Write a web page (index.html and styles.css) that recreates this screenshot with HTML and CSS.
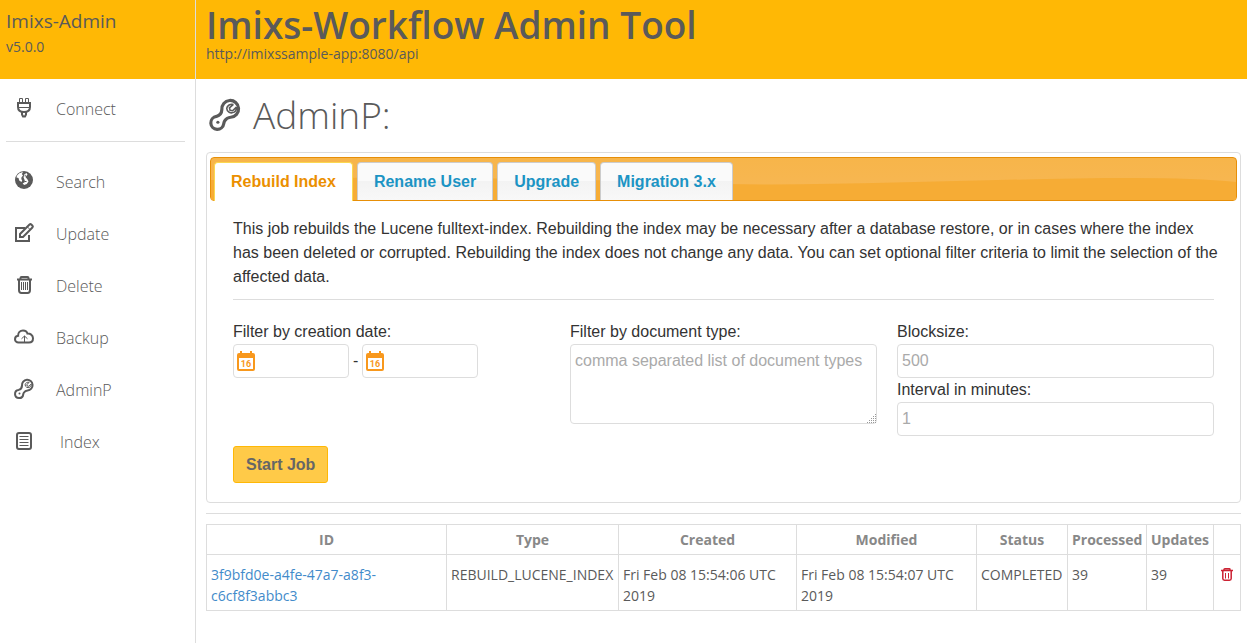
FILE: index.html
```html
<!DOCTYPE html>
<html lang="en">
<head>
<meta charset="utf-8">
<meta name="viewport" content="width=device-width, initial-scale=1">
<title>Imixs-Workflow Admin Tool</title>
<link rel="stylesheet" href="styles.css">
</head>
<body>
<svg class="defs" aria-hidden="true">
  <symbol id="wrench" viewBox="0 0 24 24">
    <path d="M10 8.600A5.300 5.300 0 1 1 15.600 13.400C14 13.500 12.700 14.300 11.800 15.700C11.400 16.300 11.300 16.900 11.200 17.500A4.100 4.100 0 1 1 6.600 12.900C8.800 12.300 9.900 10.800 10 8.600Z" fill="none" stroke="currentColor" stroke-width="2"/>
    <path d="M17.300 5.300L14.800 7.500L15.200 9L16.800 9.300L19.200 7M17.300 5.300C15.400 4.800 13.300 5.900 13.100 7.800C13.200 10 15.500 11.400 17.800 10.200C19 9.400 19.400 8.200 19.200 7" fill="none" stroke="currentColor" stroke-width="1"/>
    <circle cx="7.500" cy="16.600" r="1" fill="currentColor"/>
  </symbol>
  <symbol id="trash" viewBox="0 0 24 24">
    <path d="M5 6.500H20M8.500 6.500V5Q8.500 4 9.500 4H15.500Q16.500 4 16.500 5V6.500M7 7V17Q7 20 9.500 20H15.500Q18 20 18 17V7" fill="none" stroke="currentColor" stroke-width="2"/>
    <path d="M9.500 9V17M11.500 9V17M13.500 9V17M15.500 9V17" fill="none" stroke="currentColor" stroke-width="1"/>
  </symbol>
</svg>

<div class="app">
  <aside class="sidebar">
    <div class="brand">
      <div class="brand-name">Imixs-Admin</div>
      <div class="brand-version">v5.0.0</div>
    </div>
    <nav class="nav">
      <a class="nav-item" href="#connect">
        <svg class="icon" viewBox="0 0 24 24"><path d="M7.500 7V2.500H10.500V7M13.500 7V2.500H16.500V7" fill="none" stroke="currentColor"/><path d="M6 11V7H18V11C18 14.500 15.500 16 12 16C8.500 16 6 14.500 6 11Z" fill="none" stroke="currentColor" stroke-width="2"/><path d="M6 11.500H18" stroke="currentColor"/><path d="M10 16V18.500L11 20.500H13L14 18.500V16" fill="none" stroke="currentColor" stroke-width="2"/></svg>
        <span>Connect</span>
      </a>
      <hr class="nav-rule">
      <a class="nav-item" href="#search">
        <svg class="icon" viewBox="0 0 24 24"><circle cx="12" cy="11" r="9" fill="currentColor"/><path d="M4.500 8.500C5 5.500 8 3.300 11 3.300L9.800 5L11 6.500L9.500 8.300L9.300 10L10.200 11.500L9.500 13L7.200 11.500L6.500 9Z" fill="#fff"/><path d="M12.200 5.600L14.500 4L15.500 5.500L13.500 8L15.500 10.500L16.500 12.500L14.800 15L12.200 16L10.600 14.500L13 13L12.600 11L11.600 8.500Z" fill="#fff"/><path d="M13.200 7.500V5.800M14.500 12.500H13" stroke="currentColor"/></svg>
        <span>Search</span>
      </a>
      <a class="nav-item" href="#update">
        <svg class="icon" viewBox="0 0 24 24"><path d="M13 7H4V20H17V14" fill="none" stroke="currentColor" stroke-width="2"/><path d="M8 13L17.500 3.500Q18.500 2.700 19.500 3.700L20.500 4.700Q21.300 5.700 20.400 6.500L11 16H8Z" fill="none" stroke="currentColor" stroke-width="2"/><path d="M15.500 6L18 8.500" stroke="currentColor"/></svg>
        <span>Update</span>
      </a>
      <a class="nav-item" href="#delete">
        <svg class="icon"><use href="#trash"/></svg>
        <span>Delete</span>
      </a>
      <a class="nav-item" href="#backup">
        <svg class="icon" viewBox="0 0 24 24"><path d="M6.500 17.500C4.500 17.500 3 16 3 14.200C3 12.300 4.300 11 6.100 10.800C5.900 7.500 8.200 5.500 11 5.500C13.200 5.500 15 6.700 15.500 8.600C18 8.400 21 10 21 13.200C21 15.700 19.500 17.500 17 17.500Z" fill="none" stroke="currentColor" stroke-width="2"/><path d="M12.500 17V11M9.500 13.800L12.500 11L15.500 13.800" fill="none" stroke="currentColor" stroke-width="1"/></svg>
        <span>Backup</span>
      </a>
      <a class="nav-item" href="#adminp">
        <svg class="icon"><use href="#wrench"/></svg>
        <span>AdminP</span>
      </a>
      <a class="nav-item" href="#index">
        <svg class="icon" viewBox="0 0 24 24"><rect x="5" y="4" width="14" height="16" rx="2" fill="none" stroke="currentColor" stroke-width="2"/><path d="M7.500 7.500H16.500M7.500 10.500H16.500M7.500 13.500H16.500M7.500 16.500H16.500" stroke="currentColor" stroke-width="1"/></svg>
        <span class="nav-label-inset">Index</span>
      </a>
    </nav>
  </aside>

  <div class="main">
    <header class="masthead">
      <h1 class="title">Imixs-Workflow Admin Tool</h1>
      <div class="endpoint">http://imixssample-app:8080/api</div>
    </header>
    <main class="content">
      <h2 class="page-title"><svg class="page-icon" aria-hidden="true"><use href="#wrench"/></svg>AdminP:</h2>

      <section class="panel">
        <div class="tabs" role="tablist">
          <svg class="tabs-wave" viewBox="0 0 1000 42" preserveAspectRatio="none" aria-hidden="true"><path d="M0 22C170 18 330 20 460 25C600 30 760 20 900 20Q960 20 1000 24V42H0Z" fill="#f6ac35"/></svg>
          <button class="tab tab-active" role="tab" type="button" aria-selected="true">Rebuild Index</button>
          <button class="tab" role="tab" type="button">Rename User</button>
          <button class="tab" role="tab" type="button">Upgrade</button>
          <button class="tab" role="tab" type="button">Migration 3.x</button>
        </div>
        <form class="job">
          <p class="intro">This job rebuilds the Lucene fulltext-index. Rebuilding the index may be necessary after a database restore, or in cases where the index has been deleted or corrupted. Rebuilding the index does not change any data. You can set optional filter criteria to limit the selection of the affected data.</p>
          <hr class="rule">
          <div class="fields">
            <div>
              <label class="label" for="from">Filter by creation date:</label>
              <div class="dates">
                <span class="date"><input class="input" id="from" type="text"><svg class="date-icon" viewBox="0 0 18 20"><path d="M2 2H3V0H5V2H13V0H15V2H16Q18 2 18 4V18Q18 20 16 20H2Q0 20 0 18V4Q0 2 2 2Z" fill="#f8981d"/><path d="M2 7H16V18H2Z" fill="#fff"/><text x="9" y="16" text-anchor="middle" class="cal-day">16</text></svg></span>
                <span>-</span>
                <span class="date"><input class="input" id="to" type="text" aria-label="Filter by creation date, end"><svg class="date-icon" viewBox="0 0 18 20"><path d="M2 2H3V0H5V2H13V0H15V2H16Q18 2 18 4V18Q18 20 16 20H2Q0 20 0 18V4Q0 2 2 2Z" fill="#f8981d"/><path d="M2 7H16V18H2Z" fill="#fff"/><text x="9" y="16" text-anchor="middle" class="cal-day">16</text></svg></span>
              </div>
            </div>
            <div>
              <label class="label" for="types">Filter by document type:</label>
              <div class="area">
                <textarea class="input textarea" id="types" placeholder="comma separated list of document types"></textarea>
                <svg class="grip" viewBox="0 0 10 10" aria-hidden="true"><path d="M8 0h1v1h-1zM6 2h1v1h-1zM8 2h1v1h-1zM4 4h1v1h-1zM6 4h1v1h-1zM8 4h1v1h-1zM2 6h1v1h-1zM4 6h1v1h-1zM6 6h1v1h-1zM8 6h1v1h-1zM0 8h1v1h-1zM2 8h1v1h-1zM4 8h1v1h-1zM6 8h1v1h-1zM8 8h1v1h-1z" fill="#999"/></svg>
              </div>
            </div>
            <div>
              <label class="label" for="block">Blocksize:</label>
              <input class="input" id="block" type="text" placeholder="500">
              <label class="label" for="interval">Interval in minutes:</label>
              <input class="input" id="interval" type="text" placeholder="1">
            </div>
          </div>
          <button class="start" type="button">Start Job</button>
        </form>
      </section>

      <hr class="rule section-rule">

      <table class="jobs">
        <colgroup><col><col class="c-type"><col class="c-created"><col class="c-modified"><col class="c-status"><col class="c-processed"><col class="c-updates"><col class="c-action"></colgroup>
        <thead>
          <tr><th>ID</th><th>Type</th><th>Created</th><th>Modified</th><th>Status</th><th>Processed</th><th>Updates</th><th></th></tr>
        </thead>
        <tbody>
          <tr>
            <td><a class="job-link" href="#job">3f9bfd0e-a4fe-47a7-a8f3-c6cf8f3abbc3</a></td>
            <td>REBUILD_LUCENE_INDEX</td>
            <td>Fri Feb 08 15:54:06 UTC 2019</td>
            <td>Fri Feb 08 15:54:07 UTC 2019</td>
            <td>COMPLETED</td>
            <td>39</td>
            <td>39</td>
            <td><button class="remove" type="button" aria-label="Delete job"><svg class="remove-icon" viewBox="0 0 12 13"><path d="M0 2.500H12M3 2.500V1.500Q3 .8 3.800 .8H8.200Q9 .8 9 1.500V2.500M1.800 3V10.500Q1.800 12.200 3.500 12.200H8.500Q10.200 12.200 10.200 10.500V3" fill="none" stroke="currentColor" stroke-width="1.500"/><path d="M4.500 5V10.500M7.500 5V10.500" stroke="currentColor" stroke-width="1"/></svg></button></td>
          </tr>
        </tbody>
      </table>
    </main>
  </div>
</div>
</body>
</html>
```

FILE: styles.css
```css
* { box-sizing: border-box; }

body {
  margin: 0;
  background: #fff;
  color: #5a5a5a;
  font-family: "Open Sans", "Noto Sans", sans-serif;
  font-size: 14px;
  line-height: 21px;
}

.defs { position: absolute; width: 0; height: 0; }

.app { display: flex; min-height: 100vh; }

.sidebar {
  flex: 0 0 196px;
  border-right: 1px solid #ddd;
}

.brand {
  height: 79px;
  padding: 8px 6px;
  background: #ffb805;
}
.brand-name { font-size: 19px; line-height: 26px; }
.brand-version { line-height: 26px; }

.nav { padding: 4px 10px 0 6px; }
.nav-item {
  display: flex;
  align-items: center;
  gap: 20px;
  height: 52px;
  padding-left: 6px;
  color: #5a5a5a;
  font-size: 16px;
  font-weight: 300;
  text-decoration: none;
}
.nav-label-inset { padding-left: 4px; }
.nav-rule { margin: 6px 0 14px; border: 0; border-top: 1px solid #ddd; }
.icon { width: 24px; height: 24px; margin-bottom: 2px; }

.main { flex: 1; min-width: 0; }

.masthead {
  height: 79px;
  padding: 4px 10px;
  background: #ffb805;
}
.title { margin: 0; font-size: 37px; font-weight: 600; line-height: 42px; }
.endpoint { line-height: 16px; }

.content { padding: 10px 6px 10px 10px; }

.page-title {
  display: flex;
  align-items: center;
  gap: 9px;
  margin: 0 0 11px;
  font-size: 37px;
  font-weight: 300;
  line-height: 52px;
}
.page-icon { width: 38px; height: 38px; }

.panel {
  padding: 4px 3px 19px;
  border: 1px solid #ddd;
  border-radius: 4px;
  color: #333;
  font-family: "Liberation Sans", Arial, sans-serif;
  font-size: 16px;
  line-height: 24px;
}

.tabs {
  position: relative;
  display: flex;
  gap: 4px;
  height: 44px;
  padding: 4px 3px 0;
  border: 1px solid #e78f08;
  border-radius: 4px;
  background: linear-gradient(#f7b54a, #f7b755);
}
.tabs-wave { position: absolute; left: 0; top: 0; width: 100%; height: 100%; }
.tab {
  position: relative;
  height: 38px;
  padding: 0 16px;
  border: 1px solid #ccc;
  border-bottom: 0;
  border-radius: 4px 4px 0 0;
  background: linear-gradient(#fafafa 50%, #f3f3f3 50%, #f8f8f8);
  color: #1c94c4;
  font: bold 16px/24px "Liberation Sans", Arial, sans-serif;
}
.tab-active {
  height: 39px;
  border-color: #fbd850;
  background: #fff;
  color: #eb8f00;
}

.job { padding: 16px 23px 0; }
.intro { margin: 0 -8px 10px 0; }
.rule { margin: 0; border: 0; border-top: 1px solid #ddd; }

.fields {
  display: grid;
  grid-template-columns: 317fr 307fr 317fr;
  gap: 20px;
  margin: 20px 0 10px;
}
.label { display: block; }

.input {
  display: block;
  width: 100%;
  height: 34px;
  padding: 4px;
  border: 1px solid #ddd;
  border-radius: 4px;
  background: #fff;
  color: #333;
  font: 16px/24px "Liberation Sans", Arial, sans-serif;
}
.input::placeholder { color: #aaa; }
.area { position: relative; }
.textarea { height: 80px; resize: none; }
.grip { position: absolute; right: 0; bottom: 0; width: 10px; height: 10px; }

.dates { display: flex; align-items: center; gap: 4px; }
.date { position: relative; width: 116px; }
.date .input { padding-left: 26px; }
.date-icon { position: absolute; left: 4px; top: 7px; width: 18px; height: 20px; }
.cal-day { fill: #f8981d; font: bold 9px Roboto, sans-serif; }

.start {
  display: block;
  height: 37px;
  padding: 0 12px;
  border: 1px solid #ffb805;
  border-radius: 3px;
  background: #ffca48;
  color: #666;
  font: bold 16px/24px "Liberation Sans", Arial, sans-serif;
}

.section-rule { margin: 10px 0; }

.jobs { width: 100%; table-layout: fixed; border-collapse: collapse; }
.c-type { width: 172px; }
.c-created { width: 178px; }
.c-modified { width: 180px; }
.c-status { width: 91px; }
.c-processed { width: 79px; }
.c-updates { width: 67px; }
.c-action { width: 27px; }
.jobs th, .jobs td { padding: 4px; border: 1px solid #ddd; }
.jobs th { color: #888; font-weight: 700; }
.jobs td { padding-top: 9px; vertical-align: top; }
.job-link { color: #428bca; text-decoration: none; }
.remove {
  display: flex;
  align-items: center;
  justify-content: center;
  width: 100%;
  height: 21px;
  padding: 0;
  border: 0;
  background: none;
  color: #cc2233;
}
.remove-icon { width: 12px; height: 13px; flex: none; }
```
